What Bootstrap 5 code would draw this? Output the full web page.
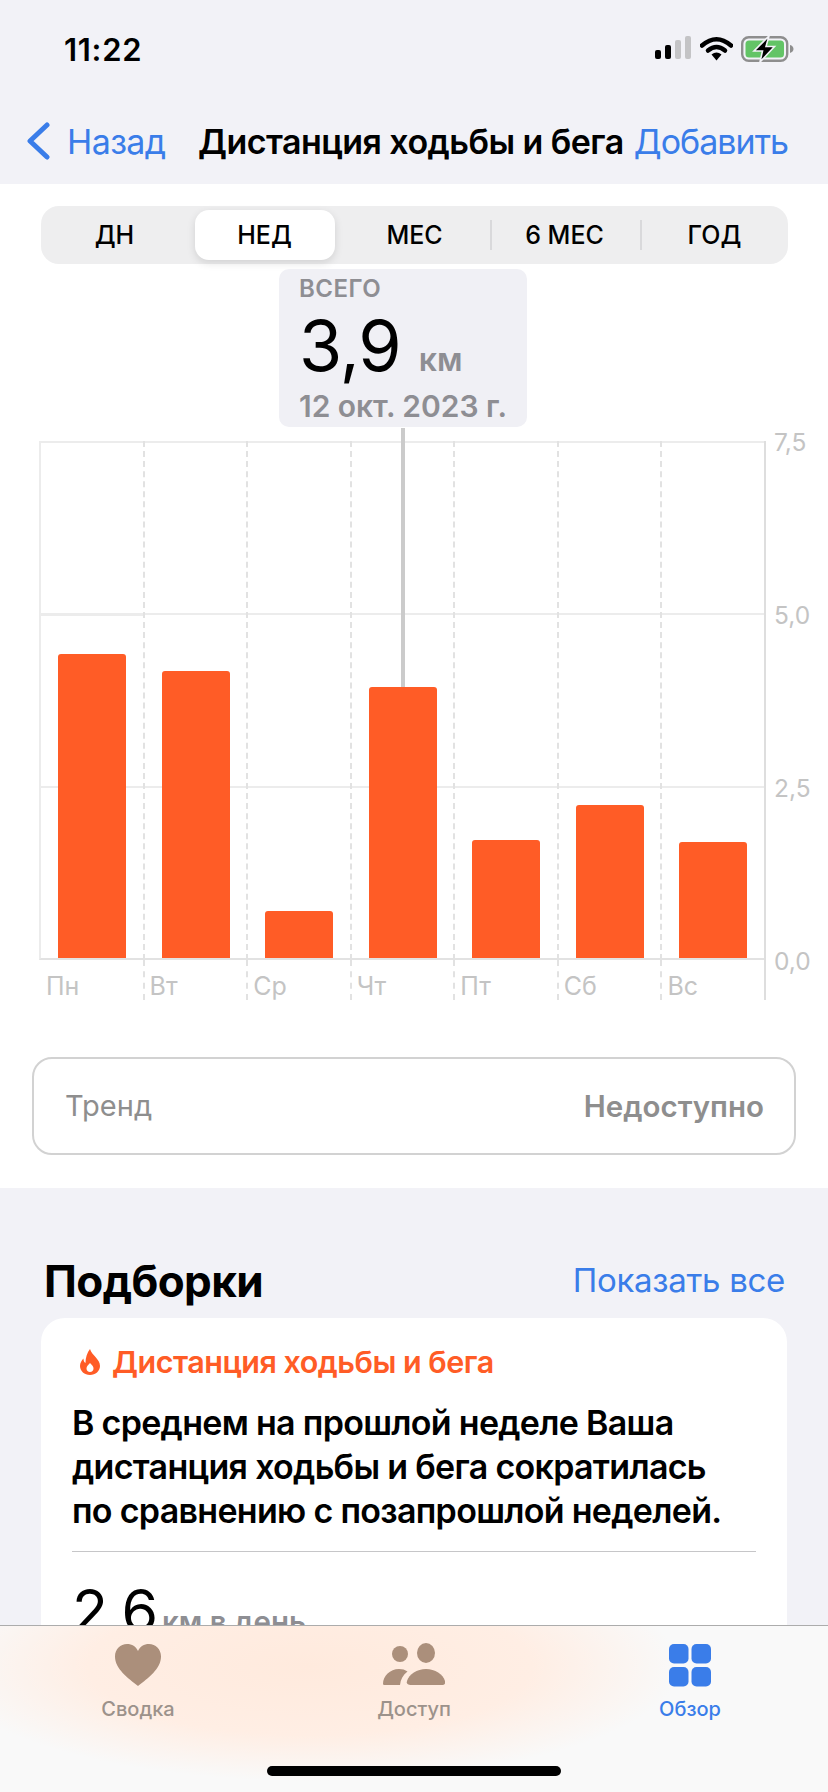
<!DOCTYPE html>
<html lang="ru">
<head>
  <meta charset="UTF-8">
  <title>Дистанция ходьбы и бега</title>
  <link href="https://cdn.jsdelivr.net/npm/bootstrap@5.3.0/dist/css/bootstrap.min.css" rel="stylesheet">
  <style>
    body {
      width: 828px;
      height: 1792px;
      overflow: hidden;
      position: relative;
      background: #f2f2f7;
      font-family: Inter, "Liberation Sans", sans-serif;
      color: #000;
    }
    a { text-decoration: none; }
    .ios-blue { color: #3a7de9; }

    .status-row { height: 100px; padding: 36px 33px 0 64px; }
    .status-time { font-size: 31px; font-weight: 600; line-height: 28px; letter-spacing: .7px; }
    .signal-bars { gap: 4px; height: 23px; margin-right: 9px; }
    .signal-bars i { width: 6px; border-radius: 2px; background: #000; }
    .signal-bars i.off { background: #c4c4c6; }

    .nav-row { height: 84px; padding: 0 40px 2px 26px; font-size: 34px; letter-spacing: -.6px; }
    .back-link { flex: 0 0 172px; gap: 17px; }
    .nav-title { font-weight: 600; letter-spacing: -.55px; }
    .nav-add { letter-spacing: -1px; }

    .white-part { background: #fff; padding: 22px 0 33px; }
    .seg-bar { margin: 0 40px 0 41px; height: 58px; padding: 4px 0; background: #eeeeef; border-radius: 18px; font-size: 25px; font-weight: 500; }
    .seg-item { flex: 0 0 150px; position: relative; padding-top: 1px; }
    .seg-item.picked { flex-basis: 140px; margin: 0 5px; background: #fff; border-radius: 14px; box-shadow: 0 3px 8px rgba(0,0,0,.12); }
    .seg-item.split::before { content: ""; position: absolute; left: 0; top: 10px; bottom: 10px; width: 2px; background: #d9d9db; }

    .chart-box { margin: 177px 0 57px 39px; position: relative; }
    .chart-cols { width: 727px; display: grid; grid-template-columns: repeat(7, 1fr); border-right: 2px solid #dedede; }
    .day-plot {
      height: 519px;
      padding-left: 17px;
      border-left: 2px dashed #e2e2e2;
      border-bottom: 2px solid #e2e2e2;
      background: repeating-linear-gradient(to bottom, #ececec 0 2px, transparent 2px 172.5px);
    }
    .day-col:first-child .day-plot { border-left: 2px solid #ececec; }
    .day-name { height: 40px; padding: 12px 0 0 5px; border-left: 2px dashed #e2e2e2; color: #c4c4c4; font-size: 25px; line-height: 28px; }
    .day-col:first-child .day-name { border-left: 0; padding-left: 7px; }
    .day-bar { width: 68px; background: #ff5c26; border-radius: 3px 3px 0 0; position: relative; }
    .day-bar.picked::before { content: ""; position: absolute; left: 32px; bottom: 100%; width: 4px; height: 259px; background: #cbcbcb; }
    .axis-nums { height: 549px; margin: -14px 0 0 8px; color: #c4c4c4; font-size: 24.500px; line-height: 30px; }

    .callout { position: absolute; left: 240px; top: -172px; width: 248px; height: 158px; padding: 6px 20px; background: #f0f0f5; border-radius: 10px; }
    .callout-cap { font-size: 24px; font-weight: 600; color: #8e8e93; line-height: 28px; letter-spacing: .5px; }
    .callout-num { font-size: 70px; font-weight: 400; line-height: 76px; letter-spacing: -1px; margin-top: 5px; white-space: nowrap; }
    .callout-num span { font-size: 32px; font-weight: 600; color: #8e8e93; letter-spacing: 0; margin-left: 18px; }
    .callout-date { font-size: 30px; font-weight: 600; color: #8e8e93; line-height: 32px; letter-spacing: -.05px; white-space: nowrap; margin-top: -8px; }

    .trend-box { margin: 0 32px; height: 98px; padding: 0 30px 0 31px; border: 2px solid #d2d2d2; border-radius: 20px; font-size: 29px; color: #8e8e8e; }
    .trend-box b { font-weight: 600; font-size: 29.500px; }

    .lower-part { padding: 60px 41px 0; }
    .lower-head { height: 70px; padding: 0 2px 10px 3px; }
    .lower-head h2 { font-size: 44px; font-weight: 700; margin: 0; letter-spacing: -.6px; }
    .lower-head a { font-size: 33px; letter-spacing: -.3px; margin-bottom: 3px; }
    .tip-card { background: #fff; border-radius: 24px; padding: 25px 31px 0; height: 500px; }
    .tip-title { color: #ff5c26; font-size: 30.500px; font-weight: 600; gap: 11px; margin-left: 7px; letter-spacing: -.5px; line-height: 38px; }
    .tip-text { font-size: 34px; font-weight: 600; line-height: 44px; margin: 20px 0 0; letter-spacing: -.7px; white-space: nowrap; }
    .tip-line { height: 1px; background: #c6c6c8; margin: 18px 0 19px; }
    .tip-num { font-size: 59px; line-height: 80px; letter-spacing: -1px; white-space: nowrap; }
    .tip-num span { font-size: 29.500px; font-weight: 600; color: #8e8e93; letter-spacing: 0; margin-left: 5px; }

    .tab-bar {
      position: absolute; left: 0; right: 0; bottom: 0; height: 167px;
      border-top: 1px solid #acacac;
      background:
        radial-gradient(ellipse 370px 115px at 310px 40px, #ffeadd 0, #ffeee4 60%, rgba(255,240,232,0) 100%),
        #f9f9f9;
    }
    .tab-item { flex: 1 1 0; padding-top: 17px; color: #9c928b; font-size: 20px; font-weight: 500; line-height: 26px; }
    .tab-item svg { display: block; height: 44px; margin-bottom: 9px; }
    .tab-item.picked { color: #3a7de9; }
    .home-bar { position: absolute; left: 267px; bottom: 16px; width: 294px; height: 10px; background: #000; border-radius: 5px; }
  </style>
</head>
<body>

  <div class="status-row d-flex justify-content-between align-items-start">
    <div class="status-time">11:22</div>
    <div class="d-flex align-items-start">
      <div class="signal-bars d-flex align-items-end mt-0">
        <i style="height: 9px"></i><i style="height: 14px"></i><i class="off" style="height: 19px"></i><i class="off" style="height: 23px"></i>
      </div>
      <svg width="33" height="25" viewBox="0 0 33 25" class="me-2">
        <path d="M2 9.5Q16.500 -3 31 9.500" fill="none" stroke="#000" stroke-width="4.500" stroke-linecap="round"/>
        <path d="M8 14.500Q16.500 7.500 25 14.500" fill="none" stroke="#000" stroke-width="4.500" stroke-linecap="round"/>
        <path d="M11.500 18.500Q16.500 14.500 21.500 18.500L16.500 24.500Z" fill="#000"/>
      </svg>
      <svg width="54" height="26" viewBox="0 0 54 26">
        <rect x="1.200" y="1.200" width="45" height="23.600" rx="6.500" fill="none" stroke="#8e8e8e" stroke-width="2.400"/>
        <rect x="4.500" y="4.500" width="38.500" height="17" rx="3.500" fill="#63c466"/>
        <path d="M49 9v8c2.200-.6 3.500-2.200 3.500-4s-1.300-3.400-3.500-4z" fill="#8e8e8e"/>
        <path d="M28 0L13 15h8.500L19 26 33.500 10.500H25z" fill="#000" stroke="#f2f2f7" stroke-width="1.600"/>
      </svg>
    </div>
  </div>

  <div class="nav-row d-flex align-items-center">
    <a href="#" class="back-link d-flex align-items-center ios-blue">
      <svg width="24" height="38" viewBox="0 0 24 38"><path d="M21 3L4 19l17 16" fill="none" stroke="#3a7de9" stroke-width="5" stroke-linecap="round" stroke-linejoin="round"/></svg>
      Назад
    </a>
    <div class="nav-title text-nowrap">Дистанция ходьбы и бега</div>
    <a href="#" class="nav-add ios-blue ms-auto">Добавить</a>
  </div>

  <div class="white-part">
    <div class="seg-bar d-flex justify-content-center">
      <div class="seg-item d-flex align-items-center justify-content-center">ДН</div>
      <div class="seg-item picked d-flex align-items-center justify-content-center">НЕД</div>
      <div class="seg-item d-flex align-items-center justify-content-center">МЕС</div>
      <div class="seg-item split d-flex align-items-center justify-content-center">6 МЕС</div>
      <div class="seg-item split d-flex align-items-center justify-content-center">ГОД</div>
    </div>

    <div class="chart-box d-flex">
      <div class="chart-cols">
        <div class="day-col"><div class="day-plot d-flex align-items-end"><div class="day-bar" style="height: 304px"></div></div><div class="day-name">Пн</div></div>
        <div class="day-col"><div class="day-plot d-flex align-items-end"><div class="day-bar" style="height: 287px"></div></div><div class="day-name">Вт</div></div>
        <div class="day-col"><div class="day-plot d-flex align-items-end"><div class="day-bar" style="height: 47px"></div></div><div class="day-name">Ср</div></div>
        <div class="day-col"><div class="day-plot d-flex align-items-end"><div class="day-bar picked" style="height: 271px"></div></div><div class="day-name">Чт</div></div>
        <div class="day-col"><div class="day-plot d-flex align-items-end"><div class="day-bar" style="height: 118px"></div></div><div class="day-name">Пт</div></div>
        <div class="day-col"><div class="day-plot d-flex align-items-end"><div class="day-bar" style="height: 153px"></div></div><div class="day-name">Сб</div></div>
        <div class="day-col"><div class="day-plot d-flex align-items-end"><div class="day-bar" style="height: 116px"></div></div><div class="day-name">Вс</div></div>
      </div>
      <div class="axis-nums d-flex flex-column justify-content-between">
        <div>7,5</div><div>5,0</div><div>2,5</div><div>0,0</div>
      </div>
      <div class="callout">
        <div class="callout-cap">ВСЕГО</div>
        <div class="callout-num">3,9<span>км</span></div>
        <div class="callout-date">12 окт. 2023 г.</div>
      </div>
    </div>

    <div class="trend-box d-flex align-items-center justify-content-between">
      <span>Тренд</span><b>Недоступно</b>
    </div>
  </div>

  <div class="lower-part">
    <div class="lower-head d-flex justify-content-between align-items-end">
      <h2>Подборки</h2>
      <a href="#" class="ios-blue">Показать все</a>
    </div>
    <div class="tip-card">
      <div class="tip-title d-flex align-items-center">
        <svg width="22" height="26" viewBox="0 0 22 26"><path fill-rule="evenodd" d="M11 0c1 3.500 3 5 5.500 8 2.500 3 4.500 5.500 4.500 9 0 5-4.500 9-10 9S1 22 1 17c0-3 1.500-5.500 3.500-7.500 0 2 .5 3.500 2 4.500C6.500 8.500 8 4 11 0zm0 14c-2 2-3.500 3.500-3.500 5.500 0 2 1.500 3.500 3.500 3.500s3.500-1.500 3.500-3.500c0-2-1.500-3.500-3.500-5.500z" fill="#ff5c26"/></svg>
        Дистанция ходьбы и бега
      </div>
      <p class="tip-text">В среднем на прошлой неделе Ваша<br>дистанция ходьбы и бега сократилась<br>по сравнению с позапрошлой неделей.</p>
      <div class="tip-line"></div>
      <div class="tip-num">2,6<span>км в день</span></div>
    </div>
  </div>

  <div class="tab-bar d-flex">
    <div class="tab-item d-flex flex-column align-items-center">
      <svg width="46" height="44" viewBox="0 0 46 44"><path d="M23 43C13 35 0 26 0 13.500 0 6 5.500 1 12 1c5 0 9 2.500 11 7 2-4.500 6-7 11-7 6.500 0 12 5 12 12.500C46 26 33 35 23 43z" fill="#ab8f7b"/></svg>
      Сводка
    </div>
    <div class="tab-item d-flex flex-column align-items-center">
      <svg width="62" height="44" viewBox="0 0 62 44"><g fill="#ab8f7b"><circle cx="17" cy="11" r="8"/><ellipse cx="43" cy="10" rx="9" ry="10"/><path d="M0 41c0-8 7-15 16-15 3.500 0 6 .8 8.500 2.500C20 32 17.500 36.500 17 42H2c-1.200 0-2-.4-2-1z"/><path d="M24 38c2-7 10-12 19-12s17 5 19 12c.8 3-1 4-3.500 4h-31c-2.500 0-4.300-1-3.500-4z"/></g></svg>
      Доступ
    </div>
    <div class="tab-item picked d-flex flex-column align-items-center">
      <svg width="42" height="44" viewBox="0 0 42 44"><g fill="#3a7de9"><rect x="0" y="1" width="19.500" height="19.500" rx="5"/><rect x="22.500" y="1" width="19.500" height="19.500" rx="5"/><rect x="0" y="24" width="19.500" height="19.500" rx="5"/><rect x="22.500" y="24" width="19.500" height="19.500" rx="5"/></g></svg>
      Обзор
    </div>
    <div class="home-bar"></div>
  </div>

</body>
</html>
